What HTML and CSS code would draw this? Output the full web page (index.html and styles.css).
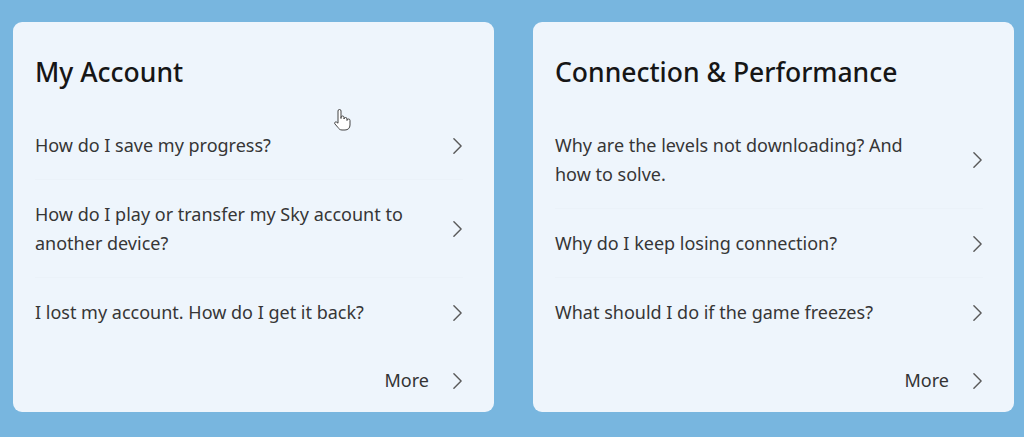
FILE: index.html
```html
<!DOCTYPE html>
<html lang="en">
<head>
    <meta charset="UTF-8">
    <meta name="viewport" content="width=device-width, initial-scale=1.0">
    <title>Help Center</title>
    <link rel="stylesheet" href="styles.css">
</head>
<body>
    <div class="cards">
        <section class="card">
            <h2>My Account</h2>
            <ul class="faq">
                <li><a href="#"><span>How do I save my progress?</span><svg class="chev" viewBox="0 0 12 20"><path d="M2 2l8 8-8 8"/></svg></a></li>
                <li><a href="#"><span>How do I play or transfer my Sky account to another device?</span><svg class="chev" viewBox="0 0 12 20"><path d="M2 2l8 8-8 8"/></svg></a></li>
                <li><a href="#"><span>I lost my account. How do I get it back?</span><svg class="chev" viewBox="0 0 12 20"><path d="M2 2l8 8-8 8"/></svg></a></li>
            </ul>
            <a href="#" class="more">More<svg class="chev" viewBox="0 0 12 20"><path d="M2 2l8 8-8 8"/></svg></a>
        </section>
        <section class="card">
            <h2>Connection &amp; Performance</h2>
            <ul class="faq">
                <li><a href="#"><span>Why are the levels not downloading? And how to solve.</span><svg class="chev" viewBox="0 0 12 20"><path d="M2 2l8 8-8 8"/></svg></a></li>
                <li><a href="#"><span>Why do I keep losing connection?</span><svg class="chev" viewBox="0 0 12 20"><path d="M2 2l8 8-8 8"/></svg></a></li>
                <li><a href="#"><span>What should I do if the game freezes?</span><svg class="chev" viewBox="0 0 12 20"><path d="M2 2l8 8-8 8"/></svg></a></li>
            </ul>
            <a href="#" class="more">More<svg class="chev" viewBox="0 0 12 20"><path d="M2 2l8 8-8 8"/></svg></a>
        </section>
    </div>
    <!-- mouse pointer -->
    <svg class="pointer" viewBox="0 0 20 24"><path d="M6 14V3a1.5 1.5 0 0 1 3 0v7.5V9.5a1.5 1.5 0 0 1 3 0v1.5V11a1.5 1.5 0 0 1 3 0v1V12.5a1.5 1.5 0 0 1 3 0V17c0 3-2 5-5 5h-3c-2 0-3-1-4-2.5L2.8 15.8c-.8-1.2.8-2.6 2-1.6L6 15.2Z"/></svg>
</body>
</html>
```

FILE: styles.css
```css
body {
    margin: 0;
    background-color: #78b6df;
    font-family: 'Noto Sans', 'Open Sans', sans-serif;
    color: #333;
}
.cards {
    display: grid;
    grid-template-columns: 481px 481px;
    gap: 39px;
    padding: 22px 0 25px 13px;
}
.card {
    background-color: #eef5fc;
    border-radius: 9px;
    padding: 35px 31px 0 22px;
    height: 390px;
    box-sizing: border-box;
}
h2 {
    margin: 0 0 24px;
    font-size: 26.5px;
    line-height: 30px;
    font-weight: 500;
    color: #161616;
}
.faq {
    list-style: none;
    margin: 0;
    padding: 0;
}
.faq li {
    border-bottom: 1px solid #ebf2f9;
}
.faq li:last-child {
    border-bottom: none;
}
.faq a {
    display: flex;
    align-items: center;
    justify-content: space-between;
    padding: 20px 0 19px;
    color: #363636;
    text-decoration: none;
    font-size: 18px;
    line-height: 29px;
}
.faq span {
    max-width: 385px;
}
.chev {
    width: 11px;
    height: 18px;
    flex-shrink: 0;
}
.chev path {
    fill: none;
    stroke: #5a5a5a;
    stroke-width: 1.6;
    stroke-linecap: round;
    stroke-linejoin: round;
}
.more {
    display: flex;
    justify-content: flex-end;
    align-items: center;
    gap: 23px;
    padding-top: 20px;
    color: #333;
    text-decoration: none;
    font-size: 18px;
    line-height: 29px;
}
.pointer {
    position: absolute;
    left: 332px;
    top: 108px;
    width: 20px;
    height: 24px;
}
.pointer path {
    fill: #fff;
    stroke: #444;
    stroke-width: 1;
    stroke-linejoin: round;
}
```
